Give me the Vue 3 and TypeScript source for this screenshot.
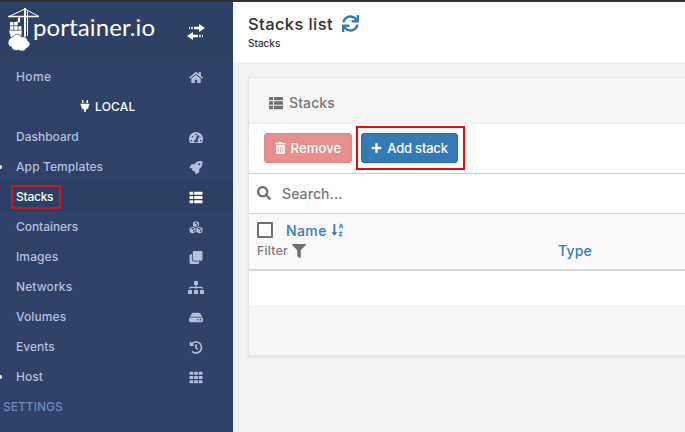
<script setup lang="ts">
interface NavItem {
  label: string
  icon: string
  active?: boolean
  dot?: boolean
  spacing: number
}

const icons: Record<string, { box: string; d: string }> = {
  home: { box: '0 0 576 512', d: 'M280.37 148.26L96 300.11V464a16 16 0 0 0 16 16l112.06-.29a16 16 0 0 0 15.92-16V368a16 16 0 0 1 16-16h64a16 16 0 0 1 16 16v95.64a16 16 0 0 0 16 16.05L464 480a16 16 0 0 0 16-16V300L295.67 148.26a12.19 12.19 0 0 0-15.3 0zM571.6 251.47L488 182.56V44.05a12 12 0 0 0-12-12h-56a12 12 0 0 0-12 12v72.61L318.47 43a48 48 0 0 0-61 0L4.34 251.47a12 12 0 0 0-1.6 16.9l25.5 31A12 12 0 0 0 45.15 301l235.22-193.74a12.19 12.19 0 0 1 15.3 0L530.9 301a12 12 0 0 0 16.9-1.6l25.5-31a12 12 0 0 0-1.7-16.93z' },
  gauge: { box: '0 0 576 512', d: 'M288 32C129 32 0 161 0 320c0 53 14 102 39 145 6 10 16 15 28 15h442c12 0 22-5 28-15 25-43 39-92 39-145C576 161 447 32 288 32zM288 96a32 32 0 1 1 0 64a32 32 0 1 1 0-64zM96 352a32 32 0 1 1 0 64a32 32 0 1 1 0-64zM144 192a32 32 0 1 1 0 64a32 32 0 1 1 0-64zM480 352a32 32 0 1 1 0 64a32 32 0 1 1 0-64zM440 200a32 32 0 1 1-14 61zM399 168c12 4 19 17 15 30l-61 184c20 20 20 45 7 66H216c-20-40 5-94 56-96l60-169c4-12 52-19 67-15z' },
  rocket: { box: '0 0 512 512', d: 'M505.1 19.1c-1.2-5.5-6.7-11-12.2-12.2C460.7 0 435.5 0 410.4 0 307.2 0 245.3 55.2 199 128H94.8c-16.3 0-35.5 11.9-42.8 26.5L2.5 253.3A28.4 28.4 0 0 0 0 264a24 24 0 0 0 24 24h103.8l-22.5 22.5c-11.3 11.3-13 32.2 0 45.2l50.9 50.9c11.2 11.2 32.2 13.2 45.3 0l22.5-22.4V488a24 24 0 0 0 24 24 28.6 28.6 0 0 0 10.7-2.5l98.7-49.4c14.7-7.3 26.6-26.5 26.6-42.9V312.8c72.5-46.3 128-108.4 128-211.1 0-25.2 0-50.4-6.9-82.6zM384 168a40 40 0 1 1 40-40 40 40 0 0 1-40 40z' },
  list: { box: '0 0 512 512', d: 'M24 32h101a24 24 0 0 1 24 24v72a24 24 0 0 1-24 24H24a24 24 0 0 1-24-24V56a24 24 0 0 1 24-24zM206 32h282a24 24 0 0 1 24 24v72a24 24 0 0 1-24 24H206a24 24 0 0 1-24-24V56a24 24 0 0 1 24-24zM24 196h101a24 24 0 0 1 24 24v72a24 24 0 0 1-24 24H24a24 24 0 0 1-24-24v-72a24 24 0 0 1 24-24zM206 196h282a24 24 0 0 1 24 24v72a24 24 0 0 1-24 24H206a24 24 0 0 1-24-24v-72a24 24 0 0 1 24-24zM24 360h101a24 24 0 0 1 24 24v72a24 24 0 0 1-24 24H24a24 24 0 0 1-24-24v-72a24 24 0 0 1 24-24zM206 360h282a24 24 0 0 1 24 24v72a24 24 0 0 1-24 24H206a24 24 0 0 1-24-24v-72a24 24 0 0 1 24-24z' },
  cubes: { box: '0 0 512 512', d: 'M256 8l118 46v137l-118 57-118-57V54zM256 54l-76 29 76 31 76-31zM276 148v57l62-31v-56zM122 226l118 46v157l-118 59L4 429V272zM122 270l-76 30 76 32 76-32zM142 368v66l60-30v-62zM390 226l118 46v157l-118 59-118-59V272zM390 270l-76 30 76 32 76-32zM410 368v66l60-30v-62z' },
  clone: { box: '0 0 512 512', d: 'M464 0c26.51 0 48 21.49 48 48v288c0 26.51-21.49 48-48 48H176c-26.51 0-48-21.49-48-48V48c0-26.51 21.49-48 48-48h288M176 416c-44.112 0-80-35.888-80-80V128H48c-26.51 0-48 21.49-48 48v288c0 26.51 21.49 48 48 48h288c26.51 0 48-21.49 48-48v-48H176z' },
  sitemap: { box: '0 0 640 512', d: 'M24 352h112a24 24 0 0 1 24 24v112a24 24 0 0 1-24 24H24a24 24 0 0 1-24-24V376a24 24 0 0 1 24-24zM264 352h112a24 24 0 0 1 24 24v112a24 24 0 0 1-24 24H264a24 24 0 0 1-24-24V376a24 24 0 0 1 24-24zM504 352h112a24 24 0 0 1 24 24v112a24 24 0 0 1-24 24H504a24 24 0 0 1-24-24V376a24 24 0 0 1 24-24zM264 0h112a24 24 0 0 1 24 24v112a24 24 0 0 1-24 24h-32v64h200q40 0 40 38v58h-48v-48H344v48h-48v-48H104v48H56v-58q0-38 40-38h200v-64h-32a24 24 0 0 1-24-24V24a24 24 0 0 1 24-24z' },
  drive: { box: '0 0 576 512', d: 'M48 256h480a48 48 0 0 1 48 48v96a48 48 0 0 1-48 48H48a48 48 0 0 1-48-48v-96a48 48 0 0 1 48-48zM480 320a32 32 0 1 0 0 64a32 32 0 1 0 0-64zM376 320a32 32 0 1 0 0 64a32 32 0 1 0 0-64zM28 226L124 84q16-22 44-22h240q28 0 44 22l96 142q-10-3-20-3H48q-10 0-20 3z' },
  history: { box: '0 0 512 512', d: 'M504 255.531c.253 136.64-111.18 248.372-247.82 248.468-59.015.042-113.223-20.53-155.822-54.911-11.077-8.94-11.905-25.541-1.839-35.607l11.267-11.267c8.609-8.609 22.353-9.551 31.891-1.984C173.062 425.135 212.781 440 256 440c101.705 0 184-82.311 184-184 0-101.705-82.311-184-184-184-48.814 0-93.149 18.969-126.068 49.932l50.754 50.754c10.08 10.08 2.941 27.314-11.313 27.314H24c-8.837 0-16-7.163-16-16V38.627c0-14.254 17.234-21.393 27.314-11.314l49.372 49.372C129.209 34.136 189.552 8 256 8c136.81 0 247.747 110.78 248 247.531zM323 334l10-12c8-11 6-26-4-34l-41-32V152c0-13-11-24-24-24h-16c-13 0-24 11-24 24v136l65 50c11 9 26 7 34-4z' },
  grid: { box: '0 0 512 512', d: 'M20 32h109a20 20 0 0 1 20 20v80a20 20 0 0 1-20 20H20a20 20 0 0 1-20-20V52a20 20 0 0 1 20-20zm182 0h108a20 20 0 0 1 20 20v80a20 20 0 0 1-20 20H202a20 20 0 0 1-20-20V52a20 20 0 0 1 20-20zm182 0h108a20 20 0 0 1 20 20v80a20 20 0 0 1-20 20H384a20 20 0 0 1-20-20V52a20 20 0 0 1 20-20zM20 196h109a20 20 0 0 1 20 20v80a20 20 0 0 1-20 20H20a20 20 0 0 1-20-20v-80a20 20 0 0 1 20-20zm182 0h108a20 20 0 0 1 20 20v80a20 20 0 0 1-20 20H202a20 20 0 0 1-20-20v-80a20 20 0 0 1 20-20zm182 0h108a20 20 0 0 1 20 20v80a20 20 0 0 1-20 20H384a20 20 0 0 1-20-20v-80a20 20 0 0 1 20-20zM20 360h109a20 20 0 0 1 20 20v80a20 20 0 0 1-20 20H20a20 20 0 0 1-20-20v-80a20 20 0 0 1 20-20zm182 0h108a20 20 0 0 1 20 20v80a20 20 0 0 1-20 20H202a20 20 0 0 1-20-20v-80a20 20 0 0 1 20-20zm182 0h108a20 20 0 0 1 20 20v80a20 20 0 0 1-20 20H384a20 20 0 0 1-20-20v-80a20 20 0 0 1 20-20z' },
}

const items: NavItem[] = [
  { label: 'Dashboard', icon: 'gauge', spacing: 0 },
  { label: 'App Templates', icon: 'rocket', dot: true, spacing: 0.1 },
  { label: 'Stacks', icon: 'list', active: true, spacing: -0.25 },
  { label: 'Containers', icon: 'cubes', spacing: -0.05 },
  { label: 'Images', icon: 'clone', spacing: 0.1 },
  { label: 'Networks', icon: 'sitemap', spacing: 0.1 },
  { label: 'Volumes', icon: 'drive', spacing: 0.1 },
  { label: 'Events', icon: 'history', spacing: 0 },
  { label: 'Host', icon: 'grid', dot: true, spacing: 0 },
]
</script>

<template>
  <div class="page">
    <div class="strip"></div>
    <div class="shell">
      <aside class="sidebar">
        <div class="brand">
          <svg class="crane" viewBox="0 0 32 44">
            <g fill="none" stroke="#fff">
              <path d="M0 9.500h31" stroke-width="1.500" />
              <path d="M2 9L17 2l13 7" stroke-width="1" />
              <path d="M17 1v29" stroke-width="2" />
              <path d="M19.500 3v26" stroke-width="1" />
              <path d="M11.500 10v5h-3" stroke-width="1" />
            </g>
            <path fill="#fff" d="M2 15h3.500v3.500H2zM6.200 15h3.500v3.500H6.200zM2 19.200h3.500v3.500H2zM6.200 19.200h3.500v3.500H6.200zM10.400 19.200h3v3.500h-3zM10 11h2v4h-2zM1 23.500h13l-1 7H3z" />
            <path fill="#fff" stroke="#30426a" stroke-width=".7" d="M4.500 30c2-4 8-3 9 0 3-1 6 1 6 3.500 4 2 2.500 7-1 7.500-1 3-5 4-8 2-3 1-7 0-7-3-5-1-4.500-8 1-10z" />
          </svg>
          <span class="wordmark">portainer.io</span>
          <svg class="toggle" viewBox="0 0 18 16">
            <path fill="#fff" d="M12 0L18 4l-6 4V5.200H7V2.800h5zM2 2.800h1v2.400H2zM4.200 2.800h1.500v2.400H4.200zM6 8L0 12l6 4v-2.800h5v-2.400H6zM12.200 10.800h1.500v2.400h-1.500zM15 10.800h1v2.400h-1z" />
          </svg>
        </div>
        <nav>
          <a class="row">
            <span class="label home">Home</span>
            <svg class="icon" :viewBox="icons.home.box"><path :d="icons.home.d" /></svg>
          </a>
          <div class="endpoint">
            <svg viewBox="0 0 384 512"><path d="M320 32a32 32 0 0 0-64 0v96h64zm48 128H16A16 16 0 0 0 0 176v32a16 16 0 0 0 16 16h16v32a160.070 160.070 0 0 0 128 156.800V512h64v-99.200A160.070 160.070 0 0 0 352 256v-32h16a16 16 0 0 0 16-16v-32a16 16 0 0 0-16-16zM128 32a32 32 0 0 0-64 0v96h64z" /></svg>
            <span>LOCAL</span>
          </div>
          <a v-for="item in items" :key="item.label" class="row" :class="{ active: item.active, dot: item.dot }">
            <span class="label" :style="{ letterSpacing: item.spacing + 'px' }">{{ item.label }}</span>
            <svg class="icon" :class="item.icon" :viewBox="icons[item.icon].box"><path fill-rule="evenodd" :d="icons[item.icon].d" /></svg>
          </a>
          <div class="section">SETTINGS</div>
        </nav>
      </aside>
      <main>
        <header class="top">
          <div class="title">
            <h1>Stacks list</h1>
            <svg viewBox="0 0 512 512"><path d="M440.650 12.570l4 82.770A247.160 247.160 0 0 0 255.830 8C134.730 8 33.910 94.920 12.290 209.820A12 12 0 0 0 24.090 224h49.050a12 12 0 0 0 11.670-9.260 175.910 175.910 0 0 1 317-56.940l-101.460-4.860a12 12 0 0 0-12.570 12v47.410a12 12 0 0 0 12 12H500a12 12 0 0 0 12-12V12a12 12 0 0 0-12-12h-47.370a12 12 0 0 0-11.980 12.570zM255.830 432a175.610 175.610 0 0 1-146-77.800l101.800 4.870a12 12 0 0 0 12.570-12v-47.400a12 12 0 0 0-12-12H12a12 12 0 0 0-12 12V500a12 12 0 0 0 12 12h47.350a12 12 0 0 0 12-12.600l-4.150-82.570A247.170 247.170 0 0 0 255.830 504c121.110 0 221.930-86.920 243.550-201.820a12 12 0 0 0-11.800-14.180h-49.050a12 12 0 0 0-11.670 9.260A175.860 175.860 0 0 1 255.830 432z" /></svg>
          </div>
          <div class="crumb">Stacks</div>
        </header>
        <section class="card">
          <div class="card-head">
            <svg :viewBox="icons.list.box"><path :d="icons.list.d" /></svg>
            <span>Stacks</span>
          </div>
          <div class="actions">
            <button class="btn remove">
              <svg viewBox="0 0 448 512"><path d="M32 464a48 48 0 0 0 48 48h288a48 48 0 0 0 48-48V128H32zm272-256a16 16 0 0 1 32 0v224a16 16 0 0 1-32 0zm-96 0a16 16 0 0 1 32 0v224a16 16 0 0 1-32 0zm-96 0a16 16 0 0 1 32 0v224a16 16 0 0 1-32 0zM432 32H312l-9.400-18.700A24 24 0 0 0 281.100 0H166.800a23.720 23.720 0 0 0-21.400 13.300L136 32H16A16 16 0 0 0 0 48v32a16 16 0 0 0 16 16h416a16 16 0 0 0 16-16V48a16 16 0 0 0-16-16z" /></svg>
              <span>Remove</span>
            </button>
            <button class="btn add">
              <svg viewBox="0 0 12 12"><path d="M5 1h2v4h4v2H7v4H5V7H1V5h4z" stroke="#fff" stroke-width=".5" /></svg>
              <span>Add stack</span>
            </button>
          </div>
          <div class="search">
            <svg viewBox="0 0 512 512"><path d="M505 442.700L405.300 343c-4.500-4.500-10.600-7-17-7H372c27.600-35.300 44-79.700 44-128C416 93.100 322.900 0 208 0S0 93.100 0 208s93.100 208 208 208c48.300 0 92.700-16.400 128-44v16.300c0 6.400 2.500 12.500 7 17l99.700 99.700c9.400 9.400 24.600 9.400 33.900 0l28.300-28.300c9.400-9.400 9.400-24.600.1-34zM208 336c-70.700 0-128-57.200-128-128 0-70.700 57.200-128 128-128 70.700 0 128 57.200 128 128 0 70.700-57.200 128-128 128z" /></svg>
            <span>Search...</span>
          </div>
          <div class="thead">
            <div class="col-name">
              <div class="name-line">
                <span class="check"></span>
                <span class="link">Name</span>
                <span class="sort">
                  <svg viewBox="0 0 7 13"><path d="M2.400 0h2v9h2.200L3.400 12.800.2 9h2.200z" /></svg>
                  <span class="az"><span>A</span><span>Z</span></span>
                </span>
              </div>
              <div class="filter">
                <span>Filter</span>
                <svg viewBox="0 0 512 512"><path d="M487.976 0H24.028C2.710 0-8.047 25.866 7.058 40.971L192 225.941V432c0 7.831 3.821 15.170 10.237 19.662l80 55.980C298.020 518.690 320 507.493 320 487.980V225.941l184.947-184.970C520.021 25.896 509.338 0 487.976 0z" /></svg>
              </div>
            </div>
            <div class="link type">Type</div>
          </div>
          <div class="blank"></div>
          <div class="foot"></div>
        </section>
      </main>
    </div>
  </div>
</template>

<style>
body { margin: 0; overflow: hidden; }
</style>

<style scoped>
* { box-sizing: border-box; }
.page { width: 685px; height: 432px; display: flex; flex-direction: column; overflow: hidden; background: #f2f2f2; font-family: Inter, "Liberation Sans", sans-serif; font-weight: 500; }
.strip { height: 2px; flex: none; background: #303030; }
.shell { flex: 1; display: flex; min-height: 0; }
.sidebar { width: 233px; flex: none; background: #30426a; color: #b2bfdc; overflow: hidden; }
.brand { height: 60px; display: flex; align-items: flex-start; padding: 5px 0 0 8px; background: #2f4067; }
.crane { width: 32px; height: 44px; flex: none; }
.wordmark { width: 147px; margin: 5px 0 0 -7px; font-family: Lato, sans-serif; font-weight: 400; font-size: 24px; letter-spacing: 0.1px; line-height: 30px; color: #fff; white-space: nowrap; }
.toggle { width: 18px; height: 16px; margin-top: 17px; margin-left: 7px; }
.row { height: 30px; display: flex; align-items: center; justify-content: space-between; padding: 0 30px 2px 16px; font-size: 12px; }
.label.home { letter-spacing: 0.4px; }
.icon { width: 14px; height: 13px; margin-top: 3px; fill: #b2bfdc; }
.icon.sitemap { width: 16px; margin-right: -1px; }
.row.active { background: #2e3f65; color: #fff; }
.active .icon { fill: #fff; }
.active .label { position: relative; }
.active .label::after { content: ""; position: absolute; left: -5px; right: -8px; top: -4px; bottom: -5px; border: 2px solid #c81922; }
.dot::before { content: ""; width: 4px; height: 4px; margin: 2px -4px 0 -18px; border-radius: 2px; background: #fff; }
.dot .label { margin-left: 18px; margin-right: auto; }
.endpoint { height: 30px; display: flex; align-items: center; gap: 5px; padding: 0 0 2px 80px; color: #fff; font-size: 12px; letter-spacing: 0.2px; }
.endpoint svg { width: 10px; height: 12px; fill: #fff; }
.section { height: 30px; line-height: 30px; padding-left: 3px; font-size: 12px; color: #7188bb; }
main { flex: 1; min-width: 0; overflow: hidden; }
.top { height: 60px; background: #fff; padding: 11px 0 0 15px; color: #303030; }
.title { display: flex; align-items: center; gap: 9px; height: 22px; }
.title h1 { margin: 0; font-size: 16.5px; font-weight: 500; letter-spacing: 0.4px; }
.title svg { width: 17px; height: 17px; margin-top: -1px; fill: #337ab7; }
.crumb { font-size: 10px; line-height: 15px; margin-top: 1px; }
.card { width: 460px; margin: 15px 0 0 15px; border: 1px solid #e5e5e5; background: #fff; box-shadow: 0 1px 2px rgba(0, 0, 0, .08); }
.card-head { height: 45px; display: flex; align-items: center; gap: 6px; padding: 4px 0 0 20px; background: #f6f6f6; color: #777; font-size: 14px; letter-spacing: 0.1px; }
.card-head svg { width: 14px; height: 14px; fill: #707070; }
.actions { height: 51px; display: flex; align-items: flex-start; gap: 9px; padding: 9px 15px; border-top: 1px solid #eee; border-bottom: 1px solid #c9d1d1; }
.btn { height: 30px; display: flex; align-items: center; justify-content: center; gap: 5px; padding: 0 0 1px; border-radius: 3px; color: #fff; font: 500 13px Inter, sans-serif; position: relative; white-space: nowrap; }
.btn svg { width: 11px; height: 12px; fill: #fff; }
.remove { width: 88px; border: 1px solid #e58783; background: #e68f8c; letter-spacing: 0.15px; }
.add { width: 97px; border: 1px solid #2e6da4; background: #337ab7; letter-spacing: -0.2px; }
.add::after { content: ""; position: absolute; left: -6px; right: -8px; top: -8px; bottom: -8px; border: 2px solid #e60c0c; }
.search { height: 39px; display: flex; align-items: center; gap: 11px; padding: 0 0 1px 8px; color: #777; font-size: 14px; letter-spacing: 0.1px; }
.search svg { width: 14px; height: 14px; fill: #707070; }
.thead { height: 58px; display: flex; border-top: 1px solid #d3d3d3; border-bottom: 2px solid #d9d9d9; background: #fafafa; }
.col-name { width: 309px; padding: 7px 0 0 8px; }
.name-line { display: flex; align-items: center; height: 18px; }
.check { width: 16px; height: 16px; border: 2px solid #707070; border-radius: 1px; background: #fff; margin-right: 13px; }
.link { color: #337ab7; font-size: 14px; letter-spacing: 0.4px; }
.sort { display: flex; align-items: center; gap: 1px; margin-left: 4px; }
.sort svg { width: 7px; height: 12px; fill: #337ab7; }
.az { display: flex; flex-direction: column; font-family: "Liberation Sans", sans-serif; font-size: 6px; font-weight: 700; line-height: 8px; color: #337ab7; -webkit-text-stroke: 0.3px #337ab7; }
.filter { display: flex; align-items: center; gap: 4px; height: 23px; font-size: 12px; letter-spacing: 0.35px; color: #777; }
.filter svg { width: 14px; height: 14px; fill: #707070; }
.type { padding-top: 27px; line-height: 20px; letter-spacing: 0.2px; }
.blank { height: 34px; background: #fff; }
.foot { height: 50px; background: #f6f6f6; }
</style>
